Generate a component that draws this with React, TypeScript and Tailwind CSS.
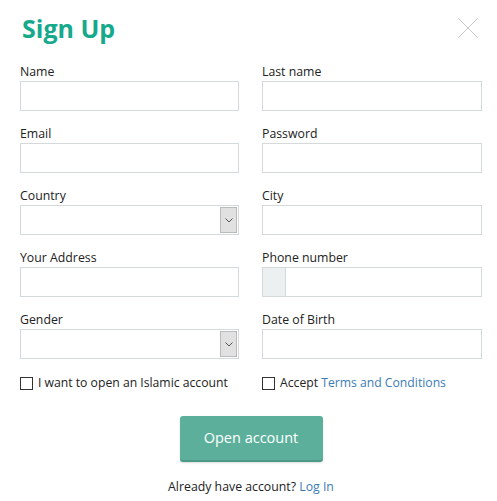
import { useState } from "react";

type Field = { label: string; kind?: "text" | "select" | "phone" };

const rows: [Field, Field][] = [
  [{ label: "Name" }, { label: "Last name" }],
  [{ label: "Email" }, { label: "Password" }],
  [{ label: "Country", kind: "select" }, { label: "City" }],
  [{ label: "Your Address" }, { label: "Phone number", kind: "phone" }],
  [{ label: "Gender", kind: "select" }, { label: "Date of Birth" }],
];

function Input({ field }: { field: Field }) {
  if (field.kind === "select") {
    return (
      <div className="flex h-[30px] border border-[#d4dadb] bg-white">
        <div className="flex-1" />
        <div className="w-[17px] my-[1px] mr-[1px] flex items-center justify-center bg-[#e1e1e1] border border-[#b9b9b9]">
          <svg width="8" height="5" viewBox="0 0 8 5" fill="none">
            <path d="M0.5 0.5 L4 4 L7.5 0.5" stroke="#555" strokeWidth="1" />
          </svg>
        </div>
      </div>
    );
  }
  if (field.kind === "phone") {
    return (
      <div className="flex h-[30px] border border-[#d4dadb] bg-white">
        <div className="w-[23px] bg-[#edf0f1] border-r border-[#d4dadb]" />
        <div className="flex-1" />
      </div>
    );
  }
  return <div className="h-[30px] border border-[#d4dadb] bg-white" />;
}

export default function App() {
  const [islamic, setIslamic] = useState(false);
  const [terms, setTerms] = useState(false);

  return (
    <div className="w-[497px] h-[501px] bg-white text-[#222] font-['Open_Sans',sans-serif]">
      {/* Header */}
      <div className="flex items-start justify-between pl-[22px] pr-[18px] pt-[11px]">
        <h1 className="text-[25px] font-bold text-[#16a98c] leading-[34px]">Sign Up</h1>
        <button className="mt-[6px] w-[22px] h-[22px]" aria-label="Close">
          <svg width="22" height="22" viewBox="0 0 22 22">
            <path d="M1 1 L21 21 M21 1 L1 21" stroke="#c8c8c8" strokeWidth="1" />
          </svg>
        </button>
      </div>

      <div className="w-[462px] ml-[20px]">
        {/* Fields */}
        <div className="pt-[19px] grid grid-cols-[219px_220px] gap-x-[23px] gap-y-[15px]">
          {rows.flat().map((f) => (
            <div key={f.label} className="flex flex-col">
              <label className="text-[12.3px] leading-[16px] mb-[1px]">{f.label}</label>
              <Input field={f} />
            </div>
          ))}
        </div>

        {/* Checkboxes */}
        <div className="pt-[15px] grid grid-cols-[219px_220px] gap-x-[23px] text-[12.2px]">
          <label className="flex items-center gap-[5px] cursor-pointer" onClick={() => setIslamic(!islamic)}>
            <span className="w-[13px] h-[13px] border border-[#333] bg-white flex items-center justify-center text-[10px]">
              {islamic ? "✓" : ""}
            </span>
            <span>I want to open an Islamic account</span>
          </label>
          <label className="flex items-center gap-[5px] cursor-pointer" onClick={() => setTerms(!terms)}>
            <span className="w-[13px] h-[13px] border border-[#333] bg-white flex items-center justify-center text-[10px]">
              {terms ? "✓" : ""}
            </span>
            <span className="whitespace-nowrap">
              Accept <a className="text-[#3b7cb6]">Terms and Conditions</a>
            </span>
          </label>
        </div>

        {/* Submit */}
        <div className="flex justify-center pt-[24px]">
          <button className="w-[143px] h-[46px] rounded-[3px] bg-[#5cb09b] border-b-[2px] border-[#4c9a86] text-white text-[14.5px] shadow-[0_1px_2px_rgba(0,0,0,0.15)]">
            Open account
          </button>
        </div>

        <div className="text-center text-[12.3px] pt-[16px]">
          Already have account? <a className="text-[#3b7cb6]">Log In</a>
        </div>
      </div>
    </div>
  );
}
